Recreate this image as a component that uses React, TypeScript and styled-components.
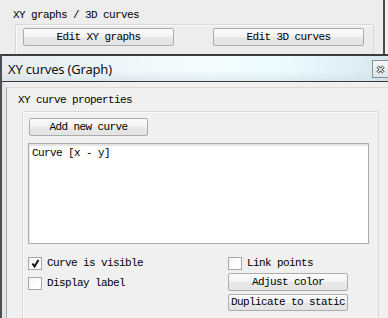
import { createGlobalStyle, styled } from "styled-components";

const GlobalStyle = createGlobalStyle`
  html, body {
    margin: 0;
    padding: 0;
    background: #f0f0f0;
  }
  * {
    box-sizing: border-box;
  }
`;

const Screen = styled.div`
  width: 388px;
  height: 318px;
  overflow: hidden;
  background: #f0f0f0;
  display: flex;
  flex-direction: column;
  font-family: "Liberation Mono", "DejaVu Sans Mono", monospace;
  font-size: 11px;
  letter-spacing: -0.6px;
  color: #000;
`;

const BackWindow = styled.div`
  width: 385px;
  height: 54px;
  flex-shrink: 0;
  border-right: 2px solid #4a4a4a;
  background: #ededed;
  padding: 9px 0 0 13px;
`;

const Caption = styled.div`
  height: 13px;
  line-height: 13px;
  margin-bottom: 2px;
`;

const GroupBox = styled.div<{ $w: number }>`
  width: ${p => p.$w}px;
  border: 1px solid #d5d9dc;
  border-radius: 2px;
  box-shadow: inset 1px 1px 0 #fafafa;
`;

const TopGroup = styled(GroupBox)`
  margin-left: 2px;
  height: 40px;
  padding: 3px 0 0 7px;
  display: flex;
  gap: 39px;
`;

const Button = styled.button<{ $w: number; $h?: number }>`
  width: ${p => p.$w}px;
  height: ${p => p.$h ?? 18}px;
  padding: 0;
  border: 1px solid #acacac;
  border-radius: 2px;
  background: linear-gradient(#fbfbfb, #f3f3f3 50%, #e8e8e8 51%, #e3e3e3);
  font: inherit;
  letter-spacing: inherit;
  color: #000;
  line-height: 15px;
  text-align: center;
  white-space: nowrap;
`;

const SubWindow = styled.div`
  flex: 1;
  border-top: 2px solid #3e3e3e;
  border-left: 2px solid #4b4f55;
  display: flex;
  flex-direction: column;
`;

const TitleBar = styled.div`
  height: 26px;
  flex-shrink: 0;
  border-bottom: 1px solid #3a3a3a;
  background:
    linear-gradient(rgba(255, 255, 255, 0) 60%, rgba(200, 215, 222, 0.45)),
    linear-gradient(to right, #e6ecef 0%, #eef6f9 30%, #f3fdff 55%, #e9fbff 75%, #d6e8ef 100%);
  display: flex;
  align-items: center;
  justify-content: space-between;
  padding-left: 6px;
`;

const Title = styled.span`
  font-family: "Noto Sans", "Open Sans", sans-serif;
  font-size: 13px;
  letter-spacing: -0.2px;
  color: #111;
`;

const CloseBox = styled.div`
  align-self: flex-start;
  width: 16px;
  height: 18px;
  margin-top: 4px;
  border: 1px solid #8a8f95;
  border-right: none;
  background: linear-gradient(#f4f6f7, #dfe4e7);
  display: flex;
  align-items: center;
  justify-content: center;
`;

const Body = styled.div`
  flex: 1;
  padding: 5px 0 0 4px;
  background: #f0f0f0;
  box-shadow: inset 4px 0 0 #e6e6e6;
`;

const Panel = styled.div`
  height: 100%;
  border-left: 1px solid #a9a9a9;
  border-top: 1px solid #dadada;
  padding: 6px 0 0 11px;
`;

const SectionLabel = styled.div`
  height: 12px;
  line-height: 12px;
  margin-bottom: 5px;
`;

const CurveGroup = styled(GroupBox)`
  margin-left: 4px;
  height: 230px;
  padding: 6px 0 0 6px;
`;

const ListBox = styled.div`
  width: 341px;
  height: 101px;
  margin: 7px 0 0 -1px;
  background: #fff;
  border: 1px solid #a9abae;
  box-shadow: inset 0 2px 0 #e4e4e4, inset 1px 0 0 #ececec;
  padding: 3px 0 0 3px;
  line-height: 12px;
`;

const Options = styled.div`
  display: grid;
  grid-template-columns: 200px 130px;
  margin: 12px 0 0 -1px;
`;

const Column = styled.div<{ $gap: number }>`
  display: flex;
  flex-direction: column;
  align-items: flex-start;
  gap: ${p => p.$gap}px;
`;

const CheckRow = styled.label`
  display: flex;
  align-items: center;
  gap: 5px;
  height: 14px;
`;

const Box = styled.span`
  width: 14px;
  height: 13px;
  border: 1px solid #a4a6a8;
  background: linear-gradient(135deg, #f2f2f2, #fff 60%);
  display: flex;
  align-items: center;
  justify-content: center;
  flex-shrink: 0;
`;

const Checkbox = ({ checked, label }: { checked?: boolean; label: string }) => (
  <CheckRow>
    <Box>
      {checked && (
        <svg width="9" height="9" viewBox="0 0 9 9">
          <path d="M1.5 4.5 L3.5 7.5 L7.5 1" stroke="#111" strokeWidth="2" fill="none" />
        </svg>
      )}
    </Box>
    <span>{label}</span>
  </CheckRow>
);

function App() {
  return (
    <>
      <GlobalStyle />
      <Screen>
        <BackWindow>
          <Caption>XY graphs / 3D curves</Caption>
          <TopGroup $w={359}>
            <Button $w={151}>Edit XY graphs</Button>
            <Button $w={151}>Edit 3D curves</Button>
          </TopGroup>
        </BackWindow>
        <SubWindow>
          <TitleBar>
            <Title>XY curves (Graph)</Title>
            <CloseBox>
              <svg width="9" height="9" viewBox="0 0 9 9">
                <path d="M1.5 1.5 L7.5 7.5 M7.5 1.5 L1.5 7.5" stroke="#333" strokeWidth="3" />
                <path d="M1.5 1.5 L7.5 7.5 M7.5 1.5 L1.5 7.5" stroke="#fff" strokeWidth="1.2" />
              </svg>
            </CloseBox>
          </TitleBar>
          <Body>
            <Panel>
              <SectionLabel>XY curve properties</SectionLabel>
              <CurveGroup $w={357}>
                <Button $w={119}>Add new curve</Button>
                <ListBox>Curve [x - y]</ListBox>
                <Options>
                  <Column $gap={6}>
                    <Checkbox checked label="Curve is visible" />
                    <Checkbox label="Display label" />
                  </Column>
                  <Column $gap={3}>
                    <Checkbox label="Link points" />
                    <Button $w={120}>Adjust color</Button>
                    <Button $w={120} $h={17}>Duplicate to static</Button>
                  </Column>
                </Options>
              </CurveGroup>
            </Panel>
          </Body>
        </SubWindow>
      </Screen>
    </>
  );
}

export default App;
